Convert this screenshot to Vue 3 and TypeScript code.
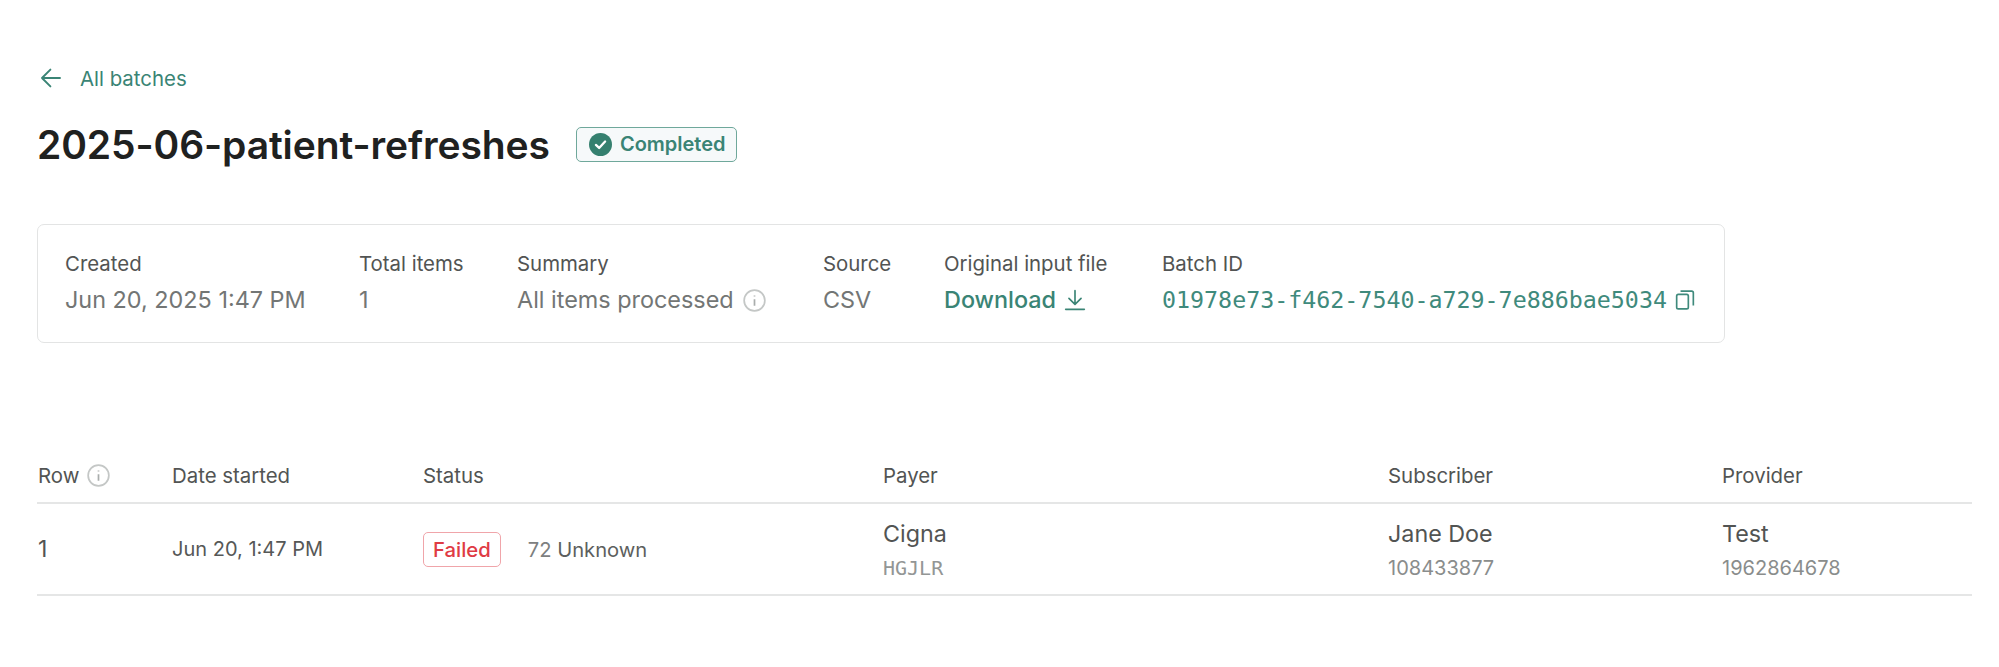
<template>
  <div class="page">
    <a class="back" href="#">
      <svg class="back-icon" viewBox="0 0 20 20" fill="none" stroke="currentColor" stroke-width="1.6" stroke-linecap="round" stroke-linejoin="round">
        <path d="M17.5 10H2.5M9.5 3 2.5 10l7 7" />
      </svg>
      <span>All batches</span>
    </a>

    <div class="title-row">
      <h1>{{ batch.name }}</h1>
      <span class="badge-completed">
        <svg class="check" viewBox="0 0 20 20">
          <circle cx="10" cy="10" r="10" fill="#35806f" />
          <path d="M6 10.4 8.8 13 14 7.4" fill="none" stroke="#fff" stroke-width="2" stroke-linecap="round" stroke-linejoin="round" />
        </svg>
        Completed
      </span>
    </div>

    <section class="card">
      <div class="field created">
        <div class="label">Created</div>
        <div class="value">{{ batch.created }}</div>
      </div>
      <div class="field total">
        <div class="label">Total items</div>
        <div class="value">{{ batch.total }}</div>
      </div>
      <div class="field summary">
        <div class="label">Summary</div>
        <div class="value with-icon">
          {{ batch.summary }}
          <svg class="info" viewBox="0 0 20 20" fill="none" stroke="#c4c7c6" stroke-width="1.5">
            <circle cx="10" cy="10" r="9" />
            <path d="M10 9v5.5M10 5.6v1" stroke="#a9adac" />
          </svg>
        </div>
      </div>
      <div class="field source">
        <div class="label">Source</div>
        <div class="value">{{ batch.source }}</div>
      </div>
      <div class="field input-file">
        <div class="label">Original input file</div>
        <a class="value download" href="#">
          Download
          <svg class="download-icon" viewBox="0 0 20 20" fill="none" stroke="currentColor" stroke-width="1.5" stroke-linecap="round" stroke-linejoin="round">
            <path d="M10 1.5v12M4.5 8.5l5.5 5.5 5.5-5.5M1.5 18.5h17" />
          </svg>
        </a>
      </div>
      <div class="field">
        <div class="label">Batch ID</div>
        <div class="value batch-id">
          {{ batch.id }}
          <svg class="copy" viewBox="0 0 18 18" fill="none" stroke="currentColor" stroke-width="1.5" stroke-linejoin="round">
            <rect x="1.5" y="4" width="10.5" height="13" rx="1.5" />
            <path d="M5 1h10a1.5 1.5 0 0 1 1.5 1.5V14" />
          </svg>
        </div>
      </div>
    </section>

    <section class="table">
      <div class="table-row table-head">
        <div class="head-cell">
          Row
          <svg class="info info-head" viewBox="0 0 20 20" fill="none" stroke="#c4c7c6" stroke-width="1.5">
            <circle cx="10" cy="10" r="9" />
            <path d="M10 9v5.5M10 5.6v1" stroke="#a9adac" />
          </svg>
        </div>
        <div class="head-cell">Date started</div>
        <div class="head-cell">Status</div>
        <div class="head-cell">Payer</div>
        <div class="head-cell">Subscriber</div>
        <div class="head-cell">Provider</div>
      </div>
      <div v-for="item in items" :key="item.row" class="table-row table-body">
        <div class="row-num">{{ item.row }}</div>
        <div class="date">{{ item.date }}</div>
        <div class="status">
          <span class="badge-failed">{{ item.status }}</span>
          <span class="reason"><span class="code">{{ item.code }}</span> {{ item.reason }}</span>
        </div>
        <div class="stack" v-for="c in item.cells" :key="c.main">
          <div class="main">{{ c.main }}</div>
          <div class="sub" :class="{ mono: c.mono }">{{ c.sub }}</div>
        </div>
      </div>
    </section>
  </div>
</template>

<script setup lang="ts">
interface Cell {
  main: string;
  sub: string;
  mono?: boolean;
}

interface BatchItem {
  row: number;
  date: string;
  status: string;
  code: number;
  reason: string;
  cells: Cell[];
}

const batch = {
  name: '2025-06-patient-refreshes',
  created: 'Jun 20, 2025 1:47 PM',
  total: 1,
  summary: 'All items processed',
  source: 'CSV',
  id: '01978e73-f462-7540-a729-7e886bae5034',
};

const items: BatchItem[] = [
  {
    row: 1,
    date: 'Jun 20, 1:47 PM',
    status: 'Failed',
    code: 72,
    reason: 'Unknown',
    cells: [
      { main: 'Cigna', sub: 'HGJLR', mono: true },
      { main: 'Jane Doe', sub: '108433877' },
      { main: 'Test', sub: '1962864678' },
    ],
  },
];
</script>

<style scoped>
.page {
  box-sizing: border-box;
  width: 1999px;
  height: 667px;
  padding: 66px 27px 0 37px;
  font-family: Inter, "Liberation Sans", sans-serif;
  color: #1f2120;
  background: #fff;
  overflow: hidden;
}

.back {
  display: flex;
  align-items: center;
  gap: 17px;
  height: 24px;
  font-size: 20.4px;
  color: #3a8475;
  text-decoration: none;
}

.back-icon {
  width: 24px;
  height: 24px;
  margin-left: 2px;
}

.title-row {
  display: flex;
  align-items: center;
  gap: 26px;
  margin-top: 31px;
  height: 46px;
}

h1 {
  margin: 0;
  font-size: 39px;
  font-weight: 600;
  letter-spacing: -0.1px;
  color: #1f2120;
}

.badge-completed {
  box-sizing: border-box;
  display: flex;
  align-items: center;
  gap: 8px;
  height: 35px;
  padding: 0 10px 0 12px;
  border: 1px solid #6fa89b;
  border-radius: 5px;
  background: #f6f9fa;
  color: #3a8475;
  font-size: 20px;
  font-weight: 600;
}

.check {
  width: 23px;
  height: 23px;
}

.card {
  box-sizing: border-box;
  display: flex;
  width: 1688px;
  height: 119px;
  margin-top: 57px;
  padding: 26px 27px 0;
  border: 1px solid #e3e4e4;
  border-radius: 7px;
}

.field .label {
  font-size: 20.4px;
  line-height: 26px;
  color: #525453;
}

.field .value {
  margin-top: 9px;
  font-size: 23.4px;
  line-height: 28px;
  color: #737675;
}

.created { width: 294px; }
.total { width: 158px; }
.summary { width: 306px; }
.source { width: 121px; }
.input-file { width: 218px; }

.with-icon {
  display: flex;
  align-items: center;
  gap: 9px;
}

.info {
  width: 23px;
  height: 23px;
}

.info-head {
  margin-left: 4px;
}

.field .download {
  display: flex;
  align-items: center;
  gap: 8px;
  font-weight: 500;
  color: #3a8475;
  text-decoration: none;
}

.download-icon {
  width: 22px;
  height: 22px;
}

.field .batch-id {
  display: flex;
  align-items: center;
  gap: 8px;
  font-family: "DejaVu Sans Mono", monospace;
  font-size: 23.3px;
  color: #3f8a7c;
}

.copy {
  width: 20px;
  height: 20px;
}

.table {
  margin-top: 99px;
}

.table-row {
  box-sizing: border-box;
  display: grid;
  grid-template-columns: 134px 251px 460px 505px 334px 1fr;
  padding-left: 1px;
  border-bottom: 2px solid #e5e6e6;
}

.table-head {
  height: 62px;
  padding-top: 6px;
  align-items: center;
  font-size: 20.4px;
  color: #525453;
}

.head-cell {
  display: flex;
  align-items: center;
  gap: 4px;
}

.table-body {
  height: 92px;
  align-items: center;
}

.row-num {
  font-size: 23px;
  color: #525453;
}

.date {
  font-size: 20px;
  color: #565857;
}

.status {
  display: flex;
  align-items: center;
  gap: 27px;
}

.badge-failed {
  box-sizing: border-box;
  display: flex;
  align-items: center;
  height: 35px;
  padding: 0 9px;
  border: 1px solid #f0a5aa;
  border-radius: 5px;
  font-size: 20.3px;
  font-weight: 500;
  color: #df3b44;
}

.reason {
  font-size: 20.2px;
  color: #5d5f5e;
}

.code {
  color: #7d807f;
}

.main {
  font-size: 23.3px;
  line-height: 30px;
  color: #525453;
}

.sub {
  margin-top: 7px;
  font-size: 20px;
  line-height: 24px;
  color: #8a8d8c;
}

.sub.mono {
  font-family: "DejaVu Sans Mono", monospace;
  font-weight: 400;
  color: #939695;
}
</style>
